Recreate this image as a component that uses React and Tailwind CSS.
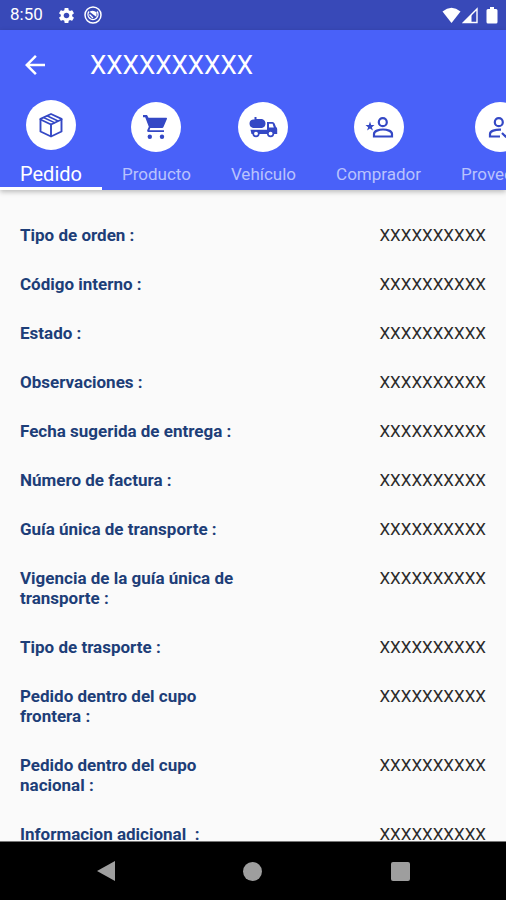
import { MdArrowBack, MdSettings } from "react-icons/md";

const BLANK = "XXXXXXXXXX";

const fields = [
  "Tipo de orden :",
  "Código interno :",
  "Estado :",
  "Observaciones :",
  "Fecha sugerida de entrega :",
  "Número de factura :",
  "Guía única de transporte :",
  "Vigencia de la guía única de transporte :",
  "Tipo de trasporte :",
  "Pedido dentro del cupo frontera :",
  "Pedido dentro del cupo nacional :",
  "Informacion adicional  :",
];

function BoxIcon() {
  return (
    <svg viewBox="0 0 50 50" className="size-full" fill="none" stroke="currentColor" strokeWidth="1.9" strokeLinejoin="round" strokeLinecap="round" aria-hidden="true">
      <path d="M25 14 35.500 18.800V31.500L25 36.500 14.500 31.500V18.800Z" />
      <path d="M14.500 19.500 25 24.500 35.500 19.500M25 24.500V36" />
      <path d="M21.500 16 31.500 20.800M18 17.800 28.500 22.600" strokeWidth="1.500" />
    </svg>
  );
}

function CartIcon() {
  return (
    <svg viewBox="0 0 50 50" className="size-full" fill="currentColor" aria-hidden="true">
      <path d="M12 13H16L17.5 15.7H35.2Q36.4 15.7 35.9 17L32.6 24.8Q32.2 26 31 26H19.3L18.4 28.2H33V30H17.5Q15.6 30 16.2 28.2L17.8 24.8 14.2 15.2H12Z" />
      <circle cx="18.8" cy="34.8" r="2.2" />
      <circle cx="31" cy="34.8" r="2.2" />
    </svg>
  );
}

function TankerIcon() {
  return (
    <svg viewBox="0 0 50 50" className="size-full" fill="currentColor" aria-hidden="true">
      <path d="M16.500 15H18.500V17H24Q27.500 18 27.500 21.500T24 26H15Q11.500 25 11.500 21.500T15 17.500H16.500Z" />
      <path fillRule="evenodd" d="M29 20H34.500Q36 20 36.600 21.500L38 25Q39.200 25.500 39.200 27V32H29ZM31 21.800V25.400H35.800L34.600 21.800Z" />
      <path d="M12.500 27.800H30V32H13.500Z" />
      <g fill="white" stroke="currentColor" strokeWidth="1.7">
        <circle cx="18" cy="31.600" r="2.800" />
        <circle cx="32.600" cy="31.600" r="2.800" />
      </g>
    </svg>
  );
}

function BuyerIcon() {
  return (
    <svg viewBox="0 0 50 50" className="size-full" fill="none" stroke="currentColor" strokeWidth="2.2" aria-hidden="true">
      <circle cx="28.8" cy="20.2" r="4" />
      <path d="M20 34.5V32C20 29 25 27.5 29 27.5S38 29 38 32V34.5Z" />
      <path fill="currentColor" stroke="none" d="M16 19.6 17.2 23 20.5 23.1 17.9 25.2 18.9 28.6 16 26.6 13.1 28.6 14.1 25.2 11.5 23.1 14.8 23Z" />
    </svg>
  );
}

function SupplierIcon() {
  return (
    <svg viewBox="0 0 50 50" className="size-full" fill="none" stroke="currentColor" strokeWidth="2.2" aria-hidden="true">
      <circle cx="23.8" cy="20.2" r="4" />
      <path d="M25 34.5H15V32C15 29 20 27.5 26 27.7" />
      <path d="M27 31 30.5 34.5 37 28" />
    </svg>
  );
}

const tabs = [
  { name: "Pedido", Icon: BoxIcon, active: true },
  { name: "Producto", Icon: CartIcon },
  { name: "Vehículo", Icon: TankerIcon },
  { name: "Comprador", Icon: BuyerIcon },
  { name: "Proveedor", Icon: SupplierIcon },
];

function Tab({ name, Icon, active }) {
  return (
    <button
      type="button"
      role="tab"
      aria-selected={Boolean(active)}
      className={
        active
          ? "flex h-full shrink-0 flex-col items-center justify-center gap-3 border-b-3 border-white px-5 pb-[2px] text-xl/6 text-white"
          : "flex h-full shrink-0 flex-col items-center justify-center gap-3 border-b-3 border-transparent px-5 pb-[2px] text-[17px]/5 text-[#b9c3fd]"
      }
    >
      <span className="size-[50px] rounded-full bg-white text-[#3448c5]">
        <Icon />
      </span>
      {name}
    </button>
  );
}

function StatusBar() {
  return (
    <div className="flex h-[30px] shrink-0 items-center bg-[#3849b8] pr-2 pl-[10px] text-[17px] text-white">
      <span>8:50</span>
      <MdSettings className="ml-[14px] size-[19px]" aria-hidden="true" />
      <svg viewBox="0 0 18 18" className="ml-2 size-[18px]" fill="none" stroke="currentColor" aria-hidden="true">
        <circle cx="9" cy="9" r="8" strokeWidth="1.5" />
        <path d="M5 5.500A5 5 0 1 0 13 5.500" strokeWidth="1.400" />
        <path d="M5.500 5.800Q9 3.400 12.500 6.200V11Z" fill="currentColor" stroke="none" />
        <path d="M5.500 8.500 9 12" strokeWidth="1.200" />
      </svg>
      <div className="ml-auto flex items-center">
        <svg viewBox="0 0 19 17" className="h-[17px] w-[19px]" fill="currentColor" aria-hidden="true">
          <path d="M.5 4.500Q9.500-2.800 18.500 4.500L9.500 16Z" />
        </svg>
        <svg viewBox="0 0 16 17" className="ml-px h-[17px] w-4" aria-hidden="true">
          <path d="M15 2V15.500H1.500Z" fill="none" stroke="currentColor" strokeWidth="1.400" />
          <path d="M1 16 9.500 7.500V16Z" fill="currentColor" />
        </svg>
        <svg viewBox="0 0 12 17" className="ml-2 h-[17px] w-3" fill="currentColor" aria-hidden="true">
          <path d="M4 0H8V2H10Q11.500 2 11.500 3.500V15Q11.500 16.500 10 16.500H2Q.5 16.500.5 15V3.500Q.5 2 2 2H4Z" />
        </svg>
      </div>
    </div>
  );
}

export default function App() {
  return (
    <div className="flex h-screen flex-col overflow-hidden bg-[#fafafa] font-[Roboto,sans-serif]">
      <StatusBar />

      <header className="z-10 shrink-0 bg-[#4961f9] text-white shadow-[0_2px_5px_rgba(0,0,0,0.25)]">
        <div className="flex h-[70px] items-center gap-10 px-5">
          <button type="button" aria-label="Volver" className="flex size-[30px] items-center justify-center">
            <MdArrowBack className="size-[30px]" />
          </button>
          <h1 className="text-[26px]">{BLANK}</h1>
        </div>
        <div role="tablist" className="flex h-[90px] overflow-x-auto [scrollbar-width:none]">
          {tabs.map((tab) => (
            <Tab key={tab.name} {...tab} />
          ))}
        </div>
      </header>

      <main className="min-h-0 flex-1 overflow-y-auto px-5 pt-[35px] [scrollbar-width:none]">
        <dl className="flex flex-col gap-[29px] text-[17px]/5">
          {fields.map((field) => (
            <div key={field} className="flex items-start justify-between">
              <dt className="w-1/2 font-bold whitespace-pre-wrap text-[#1d3e78]">{field}</dt>
              <dd className="text-[#2b2b2b]">{BLANK}</dd>
            </div>
          ))}
        </dl>
      </main>

      <nav className="grid h-[59px] shrink-0 grid-cols-3 border-t border-[#777777] bg-black px-8 text-[#9e9e9e]">
        <button type="button" aria-label="Atrás" className="flex items-center justify-center">
          <svg viewBox="0 0 20 20" className="size-5" fill="currentColor" aria-hidden="true">
            <path d="M19 0V20L1 10Z" />
          </svg>
        </button>
        <button type="button" aria-label="Inicio" className="flex items-center justify-center">
          <span className="size-[19px] rounded-full bg-current" />
        </button>
        <button type="button" aria-label="Recientes" className="flex items-center justify-center">
          <span className="size-[19px] rounded-xs bg-current" />
        </button>
      </nav>
    </div>
  );
}
